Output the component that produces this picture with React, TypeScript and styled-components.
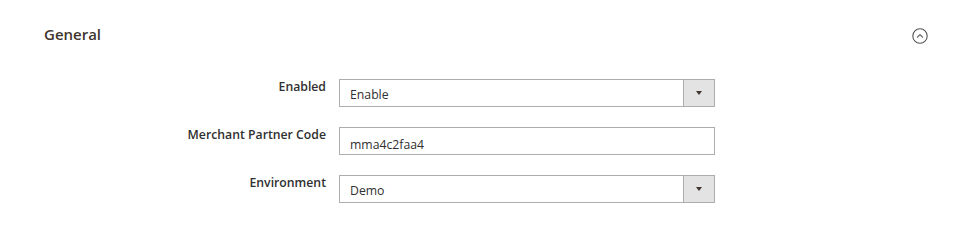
import styled, { createGlobalStyle } from 'styled-components';

const GlobalStyle = createGlobalStyle`
  body {
    margin: 0;
    background: #ffffff;
    font-family: 'Open Sans', 'Noto Sans', sans-serif;
    color: #303030;
  }
`;

type Field =
  | { label: string; kind: 'select'; value: string }
  | { label: string; kind: 'text'; value: string };

const fields: Field[] = [
  { label: 'Enabled', kind: 'select', value: 'Enable' },
  { label: 'Merchant Partner Code', kind: 'text', value: 'mma4c2faa4' },
  { label: 'Environment', kind: 'select', value: 'Demo' },
];

const CollapseIcon = () => (
  <svg width="16" height="16" viewBox="0 0 16 16" fill="none">
    <circle cx="8" cy="8" r="7.2" stroke="#555" strokeWidth="1.1" />
    <path d="M5.4 9.2 L8 6.7 L10.6 9.2" stroke="#555" strokeWidth="1.1" strokeLinecap="round" strokeLinejoin="round" />
  </svg>
);

const App = () => {
  return (
    <>
      <GlobalStyle />
      <Section>
        <SectionHeader>
          <Title>General</Title>
          <ToggleButton aria-label="Collapse">
            <CollapseIcon />
          </ToggleButton>
        </SectionHeader>
        <Fieldset>
          {fields.map((field) => (
            <Row key={field.label}>
              <Label>{field.label}</Label>
              {field.kind === 'select' ? (
                <SelectBox>
                  <SelectValue>{field.value}</SelectValue>
                  <SelectArrow>
                    <ArrowGlyph />
                  </SelectArrow>
                </SelectBox>
              ) : (
                <TextInput defaultValue={field.value} />
              )}
            </Row>
          ))}
        </Fieldset>
      </Section>
    </>
  );
};

export default App;

const Section = styled.section`
  width: 966px;
  height: 252px;
  padding-top: 23px;
  box-sizing: border-box;
`;

const SectionHeader = styled.div`
  display: flex;
  justify-content: space-between;
  align-items: center;
  padding: 0 38px 0 44px;
  height: 22px;
`;

const Title = styled.h2`
  margin: 0;
  font-size: 15px;
  font-weight: 600;
  color: #41362f;
  line-height: 20px;
`;

const ToggleButton = styled.span`
  display: flex;
  width: 16px;
  height: 16px;
  margin-top: 4px;
`;

const Fieldset = styled.div`
  display: flex;
  flex-direction: column;
  gap: 20px;
  margin-top: 34px;
`;

const Row = styled.div`
  display: flex;
  align-items: flex-start;
  gap: 13px;
`;

const Label = styled.label`
  width: 326px;
  text-align: right;
  font-size: 12.25px;
  font-weight: 600;
  line-height: 18px;
  color: #303030;
  margin-top: -1px;
`;

const fieldBox = `
  width: 376px;
  height: 28px;
  box-sizing: border-box;
  border: 1px solid #adadad;
  background: #ffffff;
  font-family: 'Open Sans', 'Noto Sans', sans-serif;
  font-size: 12.25px;
  line-height: 18px;
  color: #303030;
`;

const TextInput = styled.input`
  ${fieldBox}
  padding: 7px 10px 1px;
  margin: 0;
  outline: none;
`;

const SelectBox = styled.div`
  ${fieldBox}
  display: flex;
`;

const SelectValue = styled.span`
  flex: 1;
  padding: 6px 10px 0;
`;

const SelectArrow = styled.span`
  width: 30px;
  display: flex;
  align-items: center;
  justify-content: center;
  background: #e3e3e3;
  border-left: 1px solid #adadad;
`;

const ArrowGlyph = styled.span`
  width: 0;
  height: 0;
  border-left: 3.5px solid transparent;
  border-right: 3.5px solid transparent;
  border-top: 4px solid #41362f;
`;
